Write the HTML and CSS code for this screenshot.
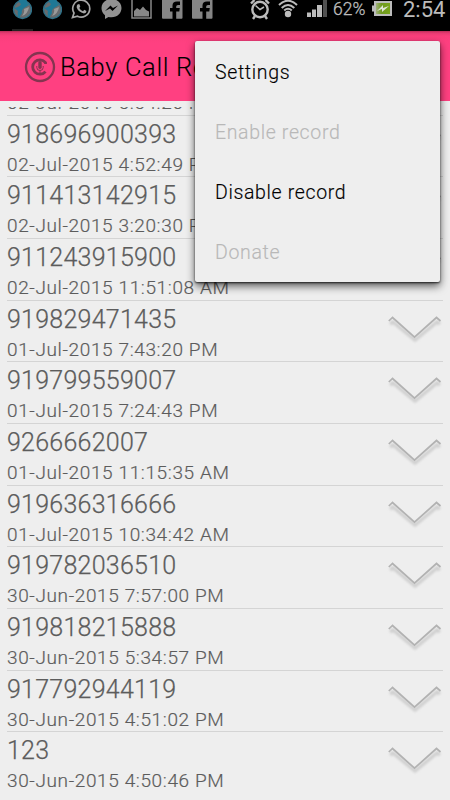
FILE: index.html
```html
<!DOCTYPE html>
<html lang="en">
<head>
<meta charset="utf-8">
<title>Baby Call Recorder</title>
<link rel="stylesheet" href="styles.css">
</head>
<body>
<svg width="0" height="0" class="defs">
  <defs>
    <linearGradient id="bat"><stop offset="0" stop-color="#a9b58c"/><stop offset=".4" stop-color="#6f9a20"/><stop offset="1" stop-color="#79a619"/></linearGradient>
    <filter id="soft" x="-20%" y="-20%" width="140%" height="160%"><feGaussianBlur stdDeviation="1.3"/></filter>
    <symbol id="chev" viewBox="0 0 56 34">
      <path d="M3 12L6 10L28 28L50 10L53 12" fill="none" stroke="#d0d0d0" stroke-width="3.500" filter="url(#soft)"/>
      <path d="M1.800 9L5.500 5.500L27.500 25.200L49.500 5.500L53.500 9" fill="none" stroke="#b2b2b2" stroke-width="1.700"/>
    </symbol>
    <symbol id="globe" viewBox="0 0 20 20">
      <circle cx="10.500" cy="9.500" r="9" fill="#686b6e" stroke="#2f7188" stroke-width="1.400"/>
      <path d="M7-1H15Q14 3 17 5L12 8Q9 10 10 13L7 18Q5 15 6 11L2 8Q8 7 9 4Q6 2 7-1Z" fill="#1f7896"/>
      <path d="M12 9L17 7Q16 14 10 16Q13 12 12 9Z" fill="#999"/>
    </symbol>
    <symbol id="fb" viewBox="0 0 21 20">
      <rect y="-2" width="20.500" height="20.800" rx="1" fill="#858585"/>
      <path d="M10.500 19V11.500H8V8H10.500V5.500Q10.500 1.500 15 1.500H18V5H16Q14.200 5 14.200 6.500V8H17.800L17.300 11.500H14.200V19Z" fill="#000"/>
    </symbol>
  </defs>
</svg>
<div class="screen">
  <header class="status">
    <div class="notes">
      <svg width="20" height="20"><use href="#globe"/></svg>
      <svg width="20" height="20"><use href="#globe"/></svg>
      <svg width="20" height="20" viewBox="0 0 20 20"><path d="M1.500 17.500L3 13A8.500 8.500 0 1 1 6.500 16.200Z" fill="none" stroke="#a5a5a5" stroke-width="1.700"/><path d="M6.500 4.500L8.300 4L9.300 6.500L8.300 8Q9.500 10.200 12 11.200L13.300 9.800L15.500 11Q15.500 13.200 13 13.400Q7.300 12.300 5.700 7.500Q5.500 5.500 6.500 4.500Z" fill="#a5a5a5"/></svg>
      <svg width="21" height="20" viewBox="0 0 21 20"><path d="M10.500-1C4.500-1 .5 3 .5 8Q.5 12.500 4 15.200V19L7.500 17Q9 17.300 10.500 17.300C16.500 17.300 20.500 13 20.500 8S16.500-1 10.500-1Z" fill="#929292"/><path d="M4 11L9.500 5.500L12 8L17 5.500L11.500 11L9 8.500Z" fill="#000"/></svg>
      <svg width="21" height="20" viewBox="0 0 21 20"><path d="M1-1H20V18H1Z" fill="none" stroke="#888" stroke-width="1.500"/><path d="M3 16.500V11L6 8L9 10L12 6.500L15 10L18 11.500V16.500Z" fill="#888"/></svg>
      <svg width="21" height="20"><use href="#fb"/></svg>
      <svg width="21" height="20"><use href="#fb"/></svg>
    </div>
    <div class="state">
      <svg class="alarm" width="20" height="20" viewBox="0 0 20 20"><g fill="none" stroke="#bcbcbc" stroke-width="2.400"><circle cx="10" cy="9.500" r="7.700"/><path d="M1 3.500L4.500 0M19 3.500L15.500 0M3 19L5 16M17 19L15 16"/><path d="M5.500 5.500L10 9.500L14 7" stroke-width="1.500"/></g></svg>
      <svg class="wifi" width="20" height="18" viewBox="0 0 20 18"><circle cx="10" cy="14" r="3.200" fill="#bcbcbc"/><path d="M1 5Q10-3.500 19 5M3.700 8Q10 2 16.300 8M6.200 10.500Q10 7 13.800 10.500" fill="none" stroke="#bcbcbc" stroke-width="2"/></svg>
      <svg class="signal" width="20" height="18" viewBox="0 0 20 18"><path d="M0 12.500H4V17H0ZM5 9.500H9V17H5ZM10 5H15V17H10Z" fill="#bcbcbc"/><path d="M16 0H20V17H16Z" fill="#505050"/></svg>
      <span class="percent">62%</span>
      <svg class="battery" width="20" height="15" viewBox="0 0 20 15"><path d="M0 4.500H2V10.500H0Z" fill="#bcbcbc"/><rect x="3" y="1" width="16" height="13" fill="url(#bat)" stroke="#bcbcbc" stroke-width="2"/><path d="M5 10L11 4V7L17 5L10 11V8Z" fill="#e0e5d7"/></svg>
      <span class="clock">2:54</span>
    </div>
    <i class="tab"></i>
  </header>
  <div class="bar">
    <svg class="logo" width="32" height="32" viewBox="0 0 32 32"><g fill="none" stroke="#853450"><circle cx="16" cy="16" r="14" stroke-width="2.300"/><path d="M21.500 13V11.500A7.200 7.200 0 1 0 21.500 20.500" stroke-width="2.800"/><path d="M12.800 15V16.500Q12.800 19.500 16 19.500T19.200 16.500V15M16 19.500V22" stroke-width="1"/></g><rect x="14.300" y="10" width="3.400" height="8" rx="1.700" fill="#853450"/></svg>
    <h1>Baby Call Recorder</h1>
  </div>
  <main class="list">
    <div class="rows">
      <div class="row"><div><div class="num">918696900393</div><div class="date">02-Jul-2015 5:54:20 PM</div></div><svg class="chev"><use href="#chev"/></svg></div>
      <div class="row"><div><div class="num">918696900393</div><div class="date">02-Jul-2015 4:52:49 PM</div></div><svg class="chev"><use href="#chev"/></svg></div>
      <div class="row"><div><div class="num">911413142915</div><div class="date">02-Jul-2015 3:20:30 PM</div></div><svg class="chev"><use href="#chev"/></svg></div>
      <div class="row"><div><div class="num">911243915900</div><div class="date">02-Jul-2015 11:51:08 AM</div></div><svg class="chev"><use href="#chev"/></svg></div>
      <div class="row"><div><div class="num">919829471435</div><div class="date">01-Jul-2015 7:43:20 PM</div></div><svg class="chev"><use href="#chev"/></svg></div>
      <div class="row"><div><div class="num">919799559007</div><div class="date">01-Jul-2015 7:24:43 PM</div></div><svg class="chev"><use href="#chev"/></svg></div>
      <div class="row"><div><div class="num">9266662007</div><div class="date">01-Jul-2015 11:15:35 AM</div></div><svg class="chev"><use href="#chev"/></svg></div>
      <div class="row"><div><div class="num">919636316666</div><div class="date">01-Jul-2015 10:34:42 AM</div></div><svg class="chev"><use href="#chev"/></svg></div>
      <div class="row"><div><div class="num">919782036510</div><div class="date">30-Jun-2015 7:57:00 PM</div></div><svg class="chev"><use href="#chev"/></svg></div>
      <div class="row"><div><div class="num">919818215888</div><div class="date">30-Jun-2015 5:34:57 PM</div></div><svg class="chev"><use href="#chev"/></svg></div>
      <div class="row"><div><div class="num">917792944119</div><div class="date">30-Jun-2015 4:51:02 PM</div></div><svg class="chev"><use href="#chev"/></svg></div>
      <div class="row"><div><div class="num">123</div><div class="date">30-Jun-2015 4:50:46 PM</div></div><svg class="chev"><use href="#chev"/></svg></div>
    </div>
  </main>
  <nav class="menu">
    <div class="item">Settings</div>
    <div class="item off">Enable record</div>
    <div class="item">Disable record</div>
    <div class="item off">Donate</div>
  </nav>
</div>
</body>
</html>
```
FILE: styles.css
```css
* { box-sizing: border-box; }
body { margin: 0; background: #eee; font-family: Roboto, "Liberation Sans", sans-serif; }
.defs { position: absolute; }
.screen { position: relative; width: 450px; height: 800px; overflow: hidden; display: flex; flex-direction: column; background: #eee; }
.status { position: relative; flex: none; height: 31px; background: #000; display: flex; justify-content: space-between; padding: 0 8px 0 12px; }
.notes { display: flex; gap: 9.500px; }
.notes svg { flex: none; }
.state { display: flex; color: #bcbcbc; }
.state svg { flex: none; }
.wifi { margin-left: 8px; }
.signal { margin-left: 9px; }
.percent { width: 39px; margin-left: 6px; font-size: 17.500px; line-height: 19px; font-weight: 300; -webkit-text-stroke: .3px; white-space: nowrap; }
.battery { margin-top: 1px; }
.clock { width: 40px; margin-left: 11px; margin-right: -1px; font-size: 22px; line-height: 19px; white-space: nowrap; }
.tab { position: absolute; left: 12px; top: 29px; width: 21px; height: 2px; background: #222; }
.bar { flex: none; height: 70px; background: linear-gradient(#b72d58, #e63a71 2px, #fa3f7c 5px, #ff4081 12px); display: flex; align-items: center; padding-left: 24px; }
.logo { flex: none; margin-top: 2px; }
h1 { margin: 2px 0 0 4px; font-size: 25.500px; font-weight: 300; line-height: 32px; letter-spacing: .65px; color: #000; -webkit-text-stroke: .1px; white-space: nowrap; }
.list { flex: 1; min-height: 0; margin-top: 6px; overflow: hidden; }
.rows { margin-top: -52.900px; padding: 0 7px 0 7px; }
.row { height: 61.670px; display: flex; justify-content: space-between; border-bottom: 1px solid #d4d4d4; padding-top: 3px; color: #5c5c5c; white-space: nowrap; }
.row:last-child { border-bottom: 0; }
.num { font-size: 25px; line-height: 32px; font-weight: 300; letter-spacing: .25px; -webkit-text-stroke: .25px; }
.date { font-size: 19px; line-height: 27.500px; font-weight: 300; letter-spacing: .63px; -webkit-text-stroke: .2px; }
.chev { width: 56px; height: 34px; margin: 8px 0 0; }
.menu { position: absolute; left: 195px; top: 41px; width: 245px; height: 241px; background: #eee; border-radius: 2px; box-shadow: 0 1px 2px rgba(0,0,0,.7), 0 4px 8px rgba(0,0,0,.65); }
.item { height: 60px; padding: 0 0 0 20px; position: relative; top: 1px; line-height: 62px; font-size: 19.500px; font-weight: 300; letter-spacing: .65px; color: #000; -webkit-text-stroke: .15px; }
.off { color: #b8b8b8; }
```
